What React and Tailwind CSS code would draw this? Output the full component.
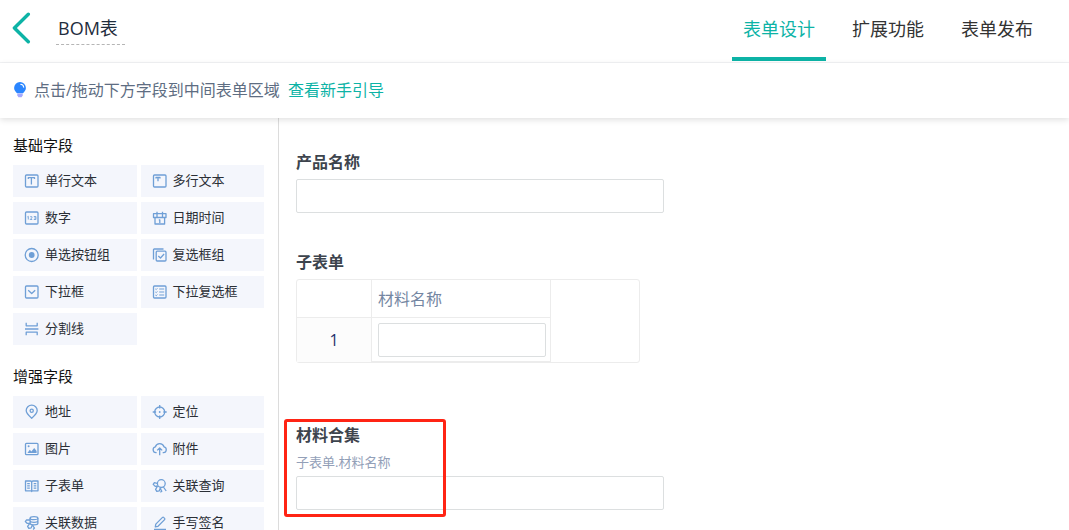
import { useState } from "react";

const ICONS = {
  text: (
    <>
      <rect x="1.5" y="2" width="12.5" height="12" rx="1" />
      <path d="M4.3 6V4.6h6.2V6M7.4 4.6v6.8" />
    </>
  ),
  textarea: (
    <>
      <rect x="1.5" y="2" width="12.5" height="12" rx="1" />
      <path d="M4 5.4v-.9h4v.9M6 4.5v3.7" />
    </>
  ),
  number: (
    <>
      <rect x="1.5" y="2" width="12.5" height="12" rx="1" />
      <path strokeWidth="0.9" d="M3.4 6.9l.9-.6v3.2M6.2 6.7h1.7v1.1L6.2 9.5h2M9.8 6.5h2.1v3H9.8M10.2 8h1.7" />
    </>
  ),
  date: (
    <path d="M3 7.5V14h9.600V7.500M1.500 7.500V3.700H14v3.800zM5 1.800v5.700M10.500 1.800v5.700M6.800 9.800h1v3.200" />
  ),
  radio: (
    <>
      <circle cx="7.7" cy="8" r="6.5" />
      <circle cx="7.7" cy="8" r="2.9" fill="currentColor" stroke="none" />
    </>
  ),
  checkbox: (
    <>
      <path d="M1.5 12.5V2.8c0-.5.3-.8.8-.8h9.2" />
      <rect x="4.2" y="4.2" width="9.8" height="9.8" rx="1" />
      <path d="M6.3 9l2.2 2 3.6-4" />
    </>
  ),
  select: (
    <>
      <rect x="1.5" y="2" width="12.5" height="12" rx="1" />
      <path d="M4.2 6.2l3.5 3.3 3.5-3.3" />
    </>
  ),
  multiselect: (
    <>
      <rect x="1.5" y="2" width="12.5" height="12" rx="1" />
      <path strokeWidth="1" d="M3.4 4.9l.8.7 1.2-1.3M3.4 8l.8.7 1.2-1.3M3.4 11.1l.8.7 1.2-1.3M7.2 5h5M7.2 8h5M7.2 11h5" />
    </>
  ),
  divider: (
    <path d="M2.2 1.8v3h11v-3M1 8h13.400M2.200 14.200v-3h11v3" />
  ),
  address: (
    <>
      <path d="M7.7 14.3C4.5 11.5 2.2 9.2 2.2 6.6a5.5 5.5 0 0 1 11 0c0 2.6-2.3 4.9-5.5 7.7z" />
      <circle cx="7.7" cy="6.7" r="1.6" />
    </>
  ),
  locate: (
    <>
      <circle cx="7.7" cy="8" r="5" />
      <path d="M7.7 1v3.4M7.7 11.6V15M.7 8h3.4M11.3 8h3.4" />
      <circle cx="7.7" cy="8" r="0.9" fill="currentColor" stroke="none" />
    </>
  ),
  image: (
    <>
      <rect x="1.5" y="2.3" width="12.5" height="11.4" rx="1" />
      <path d="M3.4 12l2.4-3.2 1.6 1.7L10.2 7l2.4 3v2z" fill="currentColor" stroke="none" />
      <circle cx="4.6" cy="5.3" r="1" fill="currentColor" stroke="none" />
    </>
  ),
  upload: (
    <path d="M4.6 11.7H3.9a3 3 0 0 1-.5-5.9 4.5 4.5 0 0 1 8.6 0 3 3 0 0 1-.5 5.9h-.8M7.7 14.3V7.2M5.2 9.4l2.5-2.4 2.5 2.4" />
  ),
  subform: (
    <path d="M1.5 3h5c.7 0 1.2.4 1.2 1v9.500c0-.4-.5-.7-1.200-.7h-5zM14 3H9c-.7 0-1.300.4-1.300 1v9.500c0-.4.6-.7 1.300-.7h5zM3.200 5.700h2.600M3.200 7.900h2.600M3.200 10.100h2.600M9.700 5.700h2.600M9.700 7.900h2.600M9.700 10.100h2.600" />
  ),
  query: (
    <>
      <circle cx="9.3" cy="5.6" r="3.9" />
      <path d="M11.4 9l2.8 4M5 5.3L2.4 4.600 1.200 6.400l2 2 2.400-.4M5.600 8l-2 3.400 1.200 2 2.400-.5 1-2.600M8.200 10.300l1.600 2.900-1.500 1" />
    </>
  ),
  data: (
    <>
      <ellipse cx="10" cy="3.2" rx="3.9" ry="1.5" />
      <path d="M6.1 3.200v5c0 .9 1.700 1.600 3.900 1.600s3.900-.7 3.900-1.600v-5M6.100 5.800c0 .9 1.700 1.500 3.900 1.500s3.900-.6 3.900-1.500M6 5H2.400L1.300 6.600l2 1.800h2.800M5.600 8.600l-2 2.800 1.200 2 2.400-.5 1-2.800M8.700 10.500l1.800 2.600-1.400 1.300" />
    </>
  ),
  sign: (
    <path d="M2 14.3h12M3.3 11.8l.5-2.7 6.7-6.7c.4-.4.8-.4 1.1 0l1 1c.4.4.4.8 0 1.2L6 11.3z" />
  ),
};

const GROUPS = [
  {
    title: "基础字段",
    fields: [
      ["text", "单行文本"],
      ["textarea", "多行文本"],
      ["number", "数字"],
      ["date", "日期时间"],
      ["radio", "单选按钮组"],
      ["checkbox", "复选框组"],
      ["select", "下拉框"],
      ["multiselect", "下拉复选框"],
      ["divider", "分割线"],
    ],
  },
  {
    title: "增强字段",
    fields: [
      ["address", "地址"],
      ["locate", "定位"],
      ["image", "图片"],
      ["upload", "附件"],
      ["subform", "子表单"],
      ["query", "关联查询"],
      ["data", "关联数据"],
      ["sign", "手写签名"],
    ],
  },
];

const TABS = ["表单设计", "扩展功能", "表单发布"];

function FieldIcon({ name }) {
  return (
    <svg
      viewBox="0 0 16 16"
      className="size-4 shrink-0 text-[#6f9fd6]"
      fill="none"
      stroke="currentColor"
      strokeWidth="1.3"
      strokeLinejoin="round"
      aria-hidden="true"
    >
      {ICONS[name]}
    </svg>
  );
}

function Header() {
  const [tab, setTab] = useState(TABS[0]);

  return (
    <header className="flex h-[63px] shrink-0 items-start justify-between border-b border-[#f2f3f5] pr-[25px] pl-3">
      <div className="flex h-14 items-center">
        <button type="button" aria-label="返回" className="text-[#0db3a6]">
          <svg viewBox="0 0 20 32" className="h-8 w-5" fill="none" stroke="currentColor" strokeWidth="3.4" strokeLinecap="round" strokeLinejoin="round">
            <path d="M16.3 2.3L2.4 16l13.9 13.8" />
          </svg>
        </button>
        <h1 className="ml-6 border-b border-dashed border-[#b5b5b5] pr-[7px] pl-[2px] text-lg leading-8 text-[#1f2d3d]">
          BOM表
        </h1>
      </div>
      <nav className="flex gap-[15px]">
        {TABS.map((t) => (
          <button
            key={t}
            type="button"
            onClick={() => setTab(t)}
            className={`h-[61px] border-b-4 px-[11px] text-lg ${tab === t ? "border-[#0db3a6] text-[#0db3a6]" : "border-transparent text-[#333]"}`}
          >
            {t}
          </button>
        ))}
      </nav>
    </header>
  );
}

function HintBar() {
  return (
    <div className="relative z-10 flex h-[55px] shrink-0 items-center bg-white px-3 pb-[2px] text-base text-[#5e6d82] shadow-[0_2px_6px_rgba(0,0,0,0.12)]">
      <svg viewBox="0 0 16 16" className="size-4 shrink-0" aria-hidden="true">
        <path d="M8 0a5.900 5.900 0 0 0-5.900 5.900c0 2.500 1.800 3.700 2.900 5.300h6c1.100-1.600 2.900-2.800 2.900-5.300A5.900 5.900 0 0 0 8 0z" fill="#2a86ff" />
        <path d="M8.700 2.200c1.700.2 2.800 1.300 3 3" stroke="#fff" strokeWidth="1.1" strokeLinecap="round" fill="none" />
        <path d="M5.300 11.600h5.400v1.700l-1.100 2H6.400l-1.100-2z" fill="#a3a8ff" />
      </svg>
      <span className="ml-[6px]">点击/拖动下方字段到中间表单区域</span>
      <a href="#guide" className="ml-2 text-[#0db3a6]">查看新手引导</a>
    </div>
  );
}

function Sidebar() {
  return (
    <aside className="flex w-[279px] shrink-0 flex-col gap-[21px] overflow-hidden border-r border-[#dcdcdc] pt-[17px] pr-[14px] pl-[13px]">
      {GROUPS.map((g) => (
        <section key={g.title}>
          <h2 className="mb-[10px] text-[15px] leading-5 text-[#111]">{g.title}</h2>
          <div className="grid grid-cols-2 gap-x-1 gap-y-[5px]">
            {g.fields.map(([icon, label]) => (
              <button key={icon} type="button" className="flex h-8 items-center gap-[5px] bg-[#f4f6fc] pl-[11px] text-[13px] text-[#2b2f36]">
                <FieldIcon name={icon} />
                {label}
              </button>
            ))}
          </div>
        </section>
      ))}
    </aside>
  );
}

function TextInput(props) {
  return <input type="text" className="block h-[34px] w-full rounded-xs border border-[#dcdfe0] bg-white px-2 outline-none" {...props} />;
}

function Canvas() {
  return (
    <main className="min-w-0 flex-1 overflow-hidden px-[17px] pt-8 text-base leading-6 text-[#3d444d]">
      <div className="mb-[37px] max-w-[368px]">
        <label htmlFor="product" className="mb-[5px] block font-bold">产品名称</label>
        <TextInput id="product" />
      </div>

      <div className="mb-[60px]">
        <h3 className="mb-[5px] font-bold">子表单</h3>
        <div className="max-w-[344px] rounded-[3px] border border-[#ececec]">
          <table className="w-full table-fixed border-separate border-spacing-0">
            <thead>
              <tr className="h-[38px]">
                <th className="w-[75px] border-r border-b border-[#ececec]" />
                <th id="material" className="w-[179px] border-r border-b border-[#ececec] px-[6px] text-left font-normal text-[#7486a2]">
                  材料名称
                </th>
                <th rowSpan={2} />
              </tr>
            </thead>
            <tbody>
              <tr className="h-11">
                <td className="border-r border-[#ececec] bg-[#fcfcfc] text-center text-[#1f2f6b]">1</td>
                <td className="border-r border-b border-[#ececec] py-1 pr-1 pl-[6px]">
                  <TextInput aria-labelledby="material" />
                </td>
              </tr>
            </tbody>
          </table>
        </div>
      </div>

      <div className="relative max-w-[368px]">
        <label htmlFor="collection" className="mb-[5px] block font-bold">材料合集</label>
        <p className="mb-1 text-[13px] leading-5 text-[#93a0b8]">子表单.材料名称</p>
        <TextInput id="collection" />
        <div className="pointer-events-none absolute -top-1 -bottom-[7px] -left-3 w-[162px] rounded-[3px] border-3 border-[#ff2414]" />
      </div>
    </main>
  );
}

export default function App() {
  return (
    <div className="flex h-screen flex-col overflow-hidden bg-white font-['Open_Sans','Noto_Sans_CJK_SC',sans-serif]">
      <Header />
      <HintBar />
      <div className="flex min-h-0 flex-1">
        <Sidebar />
        <Canvas />
      </div>
    </div>
  );
}
